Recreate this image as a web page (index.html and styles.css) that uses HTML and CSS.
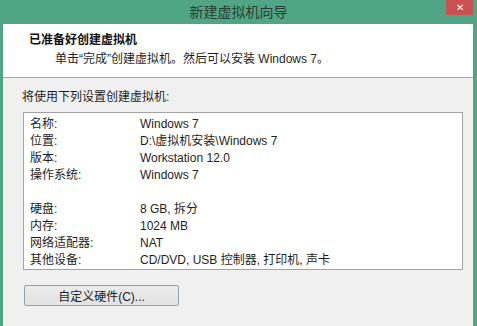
FILE: index.html
```html
<html>
<head>
    <meta charset="utf-8">
    <link rel="stylesheet" href="styles.css">
</head>
<body>
    <div class="window">
        <div class="titlebar">
            <span class="title">新建虚拟机向导</span>
            <div class="close-btn">&#x2715;</div>
        </div>
        <div class="client">
            <div class="header">
                <div class="heading">已准备好创建虚拟机</div>
                <div class="subtitle">单击“完成”创建虚拟机。然后可以安装 Windows 7。</div>
            </div>
            <div class="body">
                <div class="intro">将使用下列设置创建虚拟机:</div>
                <div class="summary">
                    <div class="row"><span>名称:</span><span>Windows 7</span></div>
                    <div class="row"><span>位置:</span><span>D:\虚拟机安装\Windows 7</span></div>
                    <div class="row"><span>版本:</span><span>Workstation 12.0</span></div>
                    <div class="row"><span>操作系统:</span><span>Windows 7</span></div>
                    <div class="row"><span></span><span></span></div>
                    <div class="row"><span>硬盘:</span><span>8 GB, 拆分</span></div>
                    <div class="row"><span>内存:</span><span>1024 MB</span></div>
                    <div class="row"><span>网络适配器:</span><span>NAT</span></div>
                    <div class="row"><span>其他设备:</span><span>CD/DVD, USB 控制器, 打印机, 声卡</span></div>
                </div>
                <button class="custom-btn">自定义硬件(C)...</button>
            </div>
        </div>
    </div>
</body>
</html>
```

FILE: styles.css
```css
body {
    margin: 0;
    padding: 0;
    background-color: #50a684;
    font-family: "Liberation Sans", "Noto Sans CJK SC", sans-serif;
    font-size: 12px;
    color: #1e1e1e;
}
.window {
    width: 477px;
    height: 326px;
    display: flex;
    flex-direction: column;
    overflow: hidden;
}
.titlebar {
    position: relative;
    height: 24px;
    flex-shrink: 0;
    display: flex;
    align-items: center;
    justify-content: center;
}
.title {
    font-size: 14px;
    color: #2a3d34;
    line-height: 24px;
}
.close-btn {
    position: absolute;
    top: 0;
    right: 4px;
    width: 27px;
    height: 15px;
    background-color: #c9514f;
    color: #fff;
    font-size: 10px;
    line-height: 15px;
    text-align: center;
}
.client {
    flex: 1;
    margin: 0 4px 0 3px;
    display: flex;
    flex-direction: column;
}
.header {
    height: 54px;
    background-color: #fff;
    border-bottom: 1px solid #a9a9a9;
    padding: 8px 0 0 26px;
    box-sizing: border-box;
}
.heading {
    font-weight: bold;
    line-height: 16px;
    color: #111;
}
.subtitle {
    margin: 3px 0 0 26px;
    line-height: 16px;
}
.body {
    flex: 1;
    background-color: #f0f0f0;
    padding: 11px 0 0 19px;
}
.intro {
    line-height: 16px;
}
.summary {
    margin: 7px 0 0 1px;
    width: 440px;
    height: 158px;
    box-sizing: border-box;
    background-color: #fff;
    border: 1px solid #a3a3a3;
    padding: 3px 0 0 6px;
}
.row {
    display: grid;
    grid-template-columns: 110px 1fr;
    height: 17px;
    line-height: 17px;
}
.custom-btn {
    margin: 15px 0 0 2px;
    width: 155px;
    height: 21px;
    padding: 0;
    font-family: inherit;
    font-size: 12px;
    color: #1e1e1e;
    background: linear-gradient(#ececec, #e2e2e2);
    border: 1px solid #8fa5b4;
    border-radius: 2px;
}
```
